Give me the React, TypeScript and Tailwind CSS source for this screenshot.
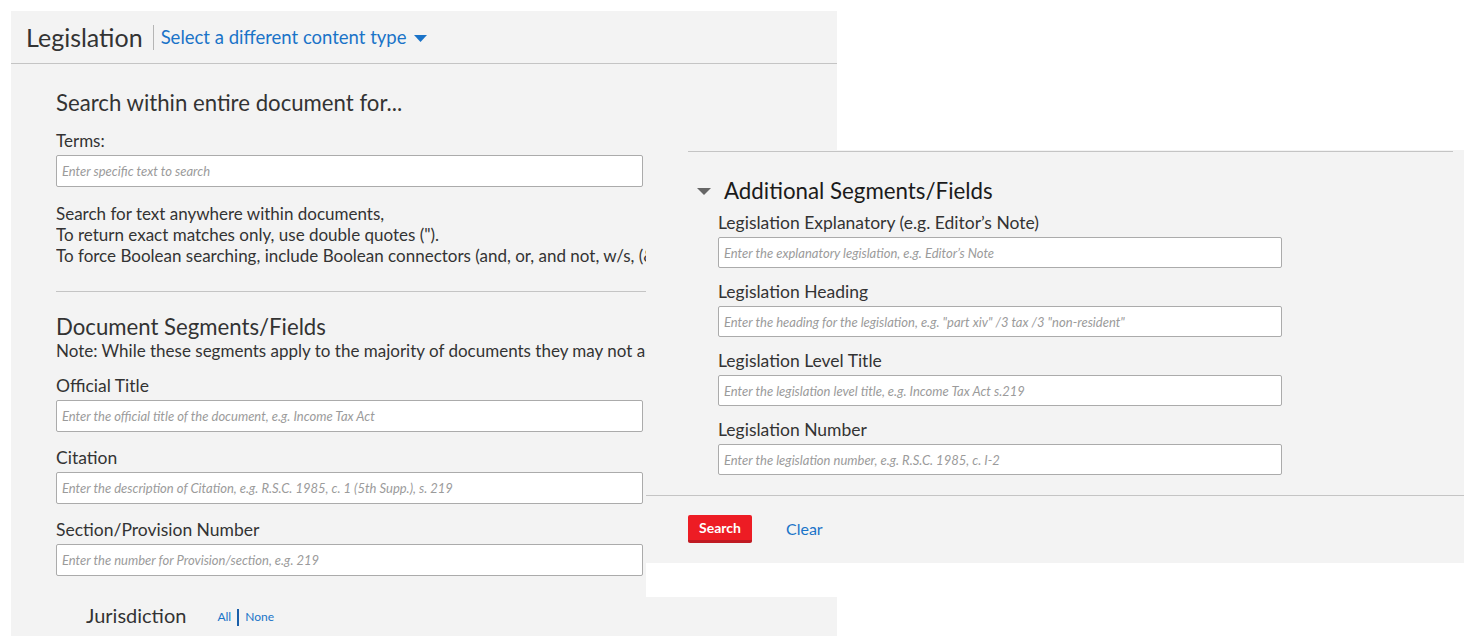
import React from "react";

const LEFT_FIELDS = [
  { label: "Official Title", placeholder: "Enter the official title of the document, e.g. Income Tax Act" },
  { label: "Citation", placeholder: "Enter the description of Citation, e.g. R.S.C. 1985, c. 1 (5th Supp.), s. 219" },
  { label: "Section/Provision Number", placeholder: "Enter the number for Provision/section, e.g. 219" },
];

const EXTRA_FIELDS = [
  { label: "Legislation Explanatory (e.g. Editor’s Note)", placeholder: "Enter the explanatory legislation, e.g. Editor’s Note" },
  { label: "Legislation Heading", placeholder: "Enter the heading for the legislation, e.g. \"part xiv\" /3 tax /3 \"non-resident\"" },
  { label: "Legislation Level Title", placeholder: "Enter the legislation level title, e.g. Income Tax Act s.219" },
  { label: "Legislation Number", placeholder: "Enter the legislation number, e.g. R.S.C. 1985, c. I-2" },
];

function TextInput({ placeholder, className }: { placeholder: string; className: string }) {
  return (
    <input
      type="text"
      placeholder={placeholder}
      className={`block rounded-[2px] border border-[#ababab] bg-white px-[5px] text-[13px] italic text-[#333] placeholder:text-[#9b9b9b] outline-none ${className}`}
    />
  );
}

function LeftPanel() {
  return (
    <div className="ml-[11px] h-[625px] w-[826px] overflow-hidden bg-[#f3f3f3]">
      <div className="flex h-[53px] items-center border-b border-[#c4c4c4] px-[15px]">
        <h1 className="text-[25px] leading-[30px] text-[#333]">Legislation</h1>
        <span className="ml-[10px] mr-[7px] h-[25px] w-px bg-[#b5b5b5]" />
        <button type="button" className="flex items-center text-[18.5px] leading-[24px] text-[#1a73c8]">
          Select a different content type
          <svg width="13" height="7" viewBox="0 0 13 7" className="ml-[7px] mt-[2px]">
            <path d="M0 0h13L6.5 7z" fill="#1a73c8" />
          </svg>
        </button>
      </div>

      <div className="pl-[45px]">
        <h2 className="mt-[25px] whitespace-nowrap text-[22.2px] leading-[28px] text-[#333]">
          Search within entire document for...
        </h2>
        <label className="mt-[14px] block text-[17px] leading-[20px] text-[#333]">Terms:</label>
        <TextInput placeholder="Enter specific text to search" className="mt-[4px] h-[32px] w-[587px]" />
        <div className="mt-[16px] w-[590px] overflow-hidden whitespace-nowrap text-[17px] leading-[21px] text-[#333]">
          <p>Search for text anywhere within documents,</p>
          <p>To return exact matches only, use double quotes (").</p>
          <p>To force Boolean searching, include Boolean connectors (and, or, and not, w/s, (&amp;), /n, etc.)</p>
        </div>
        <div className="mt-[25px] h-px w-[590px] bg-[#c4c4c4]" />

        <h2 className="mt-[21px] whitespace-nowrap text-[22.2px] leading-[28px] text-[#333]">Document Segments/Fields</h2>
        <p className="w-[590px] overflow-hidden whitespace-nowrap text-[17px] leading-[20px] text-[#333]">
          Note: While these segments apply to the majority of documents they may not apply to all documents.
        </p>

        <div className="mt-[14px] flex flex-col gap-[15px]">
          {LEFT_FIELDS.map((f) => (
            <div key={f.label}>
              <label className="block text-[17.5px] leading-[22px] text-[#333]">{f.label}</label>
              <TextInput placeholder={f.placeholder} className="mt-[3px] h-[32px] w-[587px]" />
            </div>
          ))}
        </div>

        <div className="ml-[30px] mt-[26px] flex items-center">
          <span className="text-[20px] leading-[26px] text-[#333]">Jurisdiction</span>
          <a className="ml-[31px] mt-[4px] text-[12px] text-[#1a73c8]">All</a>
          <span className="ml-[6px] mt-[4px] h-[17px] w-[2px] bg-[#1a5fa8]" />
          <a className="ml-[6px] mt-[4px] text-[12px] text-[#1a73c8]">None</a>
        </div>
      </div>
    </div>
  );
}

function AdditionalPanel() {
  return (
    <div className="absolute left-[646px] top-[150px] h-[447px] w-[818px] bg-white">
      <div className="bg-[#f3f3f3] pt-px">
        <div className="ml-[42px] mr-[11px] border-t border-[#c4c4c4]">
          <div className="mt-[25px] flex items-center">
            <svg width="14" height="7" viewBox="0 0 14 7" className="ml-[9px]">
              <path d="M0 0h14L7 7z" fill="#666" />
            </svg>
            <h2 className="ml-[13px] text-[22.3px] leading-[28px] text-[#1b1b1b]">Additional Segments/Fields</h2>
          </div>
          <div className="ml-[30px] mt-[7px] flex flex-col gap-[13px]">
            {EXTRA_FIELDS.map((f) => (
              <div key={f.label}>
                <label className="block text-[17.5px] leading-[22px] text-[#333]">{f.label}</label>
                <TextInput placeholder={f.placeholder} className="mt-[3px] h-[31px] w-[564px]" />
              </div>
            ))}
          </div>
        </div>
        <div className="mt-[20px] h-px bg-[#c4c4c4]" />
        <div className="flex items-center pb-[20px] pl-[42px] pt-[19px]">
          <button
            type="button"
            className="h-[28px] w-[64px] rounded-[2px] border-b-[3px] border-[#c01a22] bg-[#ed1c24] text-[14px] font-bold text-white"
          >
            Search
          </button>
          <button type="button" className="ml-[34px] text-[16px] text-[#1a73c8]">
            Clear
          </button>
        </div>
      </div>
    </div>
  );
}

export default function App() {
  return (
    <div className="relative h-[636px] w-[1464px] overflow-hidden bg-white pt-[11px] font-['Lato','Open_Sans',sans-serif]">
      <LeftPanel />
      <AdditionalPanel />
    </div>
  );
}
